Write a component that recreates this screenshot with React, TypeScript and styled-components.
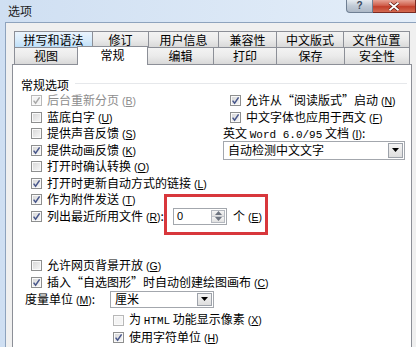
import React from "react";
import styled, { createGlobalStyle } from "styled-components";

const Global = createGlobalStyle`
  html, body { margin: 0; padding: 0; }
  body {
    width: 416px; height: 347px; overflow: hidden;
    font-family: "Noto Sans CJK SC", "Noto Sans", sans-serif;
    font-size: 12px; color: #000;
  }
`;

const Window = styled.div`
  width: 416px; height: 347px; display: flex; flex-direction: column; overflow: hidden;
  background: linear-gradient(to right, #cfdff2, #e4eef9);
`;

const TitleBar = styled.div`
  height: 22px; flex: 0 0 22px; display: flex; align-items: flex-start;
`;

const Title = styled.div`
  padding: 4px 0 0 8px; line-height: 14px; font-size: 12px; color: #1a1a1a;
`;

const Caption = styled.div`
  margin-left: auto; display: flex; align-items: flex-start;
`;

const HelpBtn = styled.div`
  width: 27px; height: 13px; box-sizing: border-box;
  border: 1px solid #6f7f93; border-top: none; border-radius: 0 0 0 4px;
  background: linear-gradient(#e6ebf1, #c0cad6 50%, #aeb9c7);
  display: flex; align-items: center; justify-content: center;
  font-family: "Liberation Sans", sans-serif; font-weight: bold; font-size: 10px; color: #3a4a5e;
  line-height: 12px;
`;

const CloseBtn = styled.div`
  width: 43px; height: 13px; box-sizing: border-box;
  border: 1px solid #7a2a22; border-top: none; border-left: none;
  background: linear-gradient(#e7a395, #d0604d 45%, #c23f2a 55%, #d46a52);
  display: flex; align-items: center; justify-content: center;
`;

const Client = styled.div`
  flex: 1; margin-left: 5px; display: flex; flex-direction: column;
  border-left: 1px solid #8ea3bd; border-top: 1px solid #8ea3bd;
  background: #f0f0f0; padding: 8px 0 0 6px;
`;

const TabStrip = styled.div`
  display: flex; flex-direction: column; padding-left: 2px;
`;

const TabRow = styled.div<{ $h: number }>`
  display: flex; height: ${(p) => p.$h}px; align-items: flex-start;
`;

const Tab = styled.div<{ $w: number; $hot?: boolean; $h: number }>`
  box-sizing: border-box; width: ${(p) => p.$w + 1}px; height: ${(p) => p.$h}px;
  margin-right: -1px;
  border: 1px solid #8c8f97; border-bottom: none;
  background: ${(p) =>
    p.$hot
      ? "linear-gradient(#eaf4fd, #d9ecfb 50%, #bedff8)"
      : "linear-gradient(#f3f3f3, #ebebeb 50%, #d9d9d9)"};
  display: flex; align-items: center; justify-content: center;
  font-size: 12px; line-height: 14px; white-space: nowrap;
`;

const ActiveTab = styled.div<{ $w: number }>`
  position: relative; z-index: 2;
  box-sizing: border-box; width: ${(p) => p.$w + 1}px; height: 19px; margin-top: -1px;
  margin-right: -1px;
  border: 1px solid #8c8f97; border-bottom: none; background: #fff;
  display: flex; align-items: center; justify-content: center; padding-bottom: 2px;
  font-size: 12px; line-height: 14px;
`;

const Panel = styled.div`
  flex: 1; width: 400px; box-sizing: border-box;
  border: 1px solid #8c8f97; border-bottom: none; background: #fff;
  padding: 11px 0 0 8px; display: flex; flex-direction: column;
`;

const HeadingRow = styled.div`
  height: 16.5px; display: flex; align-items: center; gap: 6px; padding-right: 4px;
`;

const Rule = styled.div`
  flex: 1; height: 1px; background: #e6e8eb; margin-top: -1px;
`;

const TopGrid = styled.div`
  display: grid; grid-template-columns: 202px 1fr;
`;

const Col = styled.div<{ $pl: number }>`
  display: flex; flex-direction: column; padding-left: ${(p) => p.$pl}px;
`;

const Row = styled.div<{ $h?: number; $pl?: number; $mt?: number }>`
  height: ${(p) => p.$h ?? 16.5}px; display: flex; align-items: center; gap: 5px;
  white-space: nowrap; line-height: 14px;
  padding-left: ${(p) => p.$pl ?? 0}px;
  margin-top: ${(p) => p.$mt ?? 0}px;
`;

const Text = styled.span<{ $dis?: boolean; $w?: number }>`
  color: ${(p) => (p.$dis ? "#8d8d8d" : "#000")};
  ${(p) => (p.$w ? `flex: 0 0 ${p.$w}px;` : "")}
`;

const Key = styled.span`
  font-family: "Liberation Sans", sans-serif; font-size: 10.5px; margin-left: 3px;
  & u { text-underline-offset: 1px; }
`;

const Latin = styled.span`
  font-family: "Liberation Mono", monospace; font-size: 11px;
`;

const Box = styled.span<{ $dis?: boolean }>`
  flex: 0 0 11px; width: 11px; height: 11px; box-sizing: border-box;
  border: 1px solid ${(p) => (p.$dis ? "#b8b8b8" : "#8e8f8f")};
  background: ${(p) =>
    p.$dis ? "#f4f4f4" : "linear-gradient(135deg, #d5d5d5, #f8f8f8)"};
  box-shadow: inset 0 0 0 1px #fafafa;
  display: flex; align-items: center; justify-content: center;
`;

const Select = styled.div<{ $w: number; $h: number }>`
  width: ${(p) => p.$w}px; height: ${(p) => p.$h}px; box-sizing: border-box;
  border: 1px solid #a3a7ad; background: #fff;
  display: flex; align-items: center; padding: 1px;
`;

const SelectText = styled.span`
  flex: 1; padding-left: 3px; line-height: 14px; white-space: nowrap;
`;

const SelectBtn = styled.span`
  width: 15px; align-self: stretch; box-sizing: border-box;
  border: 1px solid #9da2aa; background: linear-gradient(#f4f4f4, #dedede);
  display: flex; align-items: center; justify-content: center;
`;

const SpinWrap = styled.div`
  position: relative; display: flex; align-items: center; gap: 6px;
  &::before {
    content: ""; position: absolute;
    left: -9px; right: -6px; top: -14px; bottom: -10px;
    border: 3px solid #d8373c; pointer-events: none;
  }
`;

const Spin = styled.div`
  width: 54px; height: 17px; box-sizing: border-box;
  border: 1px solid #a3a7ad; background: #fff; display: flex; padding: 1px;
`;

const SpinValue = styled.span`
  flex: 1; padding-left: 2px; font-family: "Liberation Sans", sans-serif; font-size: 11px;
  line-height: 13px;
`;

const SpinBtns = styled.span`
  width: 14px; display: flex; flex-direction: column;
  border: 1px solid #b5b9c0; box-sizing: border-box;
`;

const SpinHalf = styled.span`
  flex: 1; background: linear-gradient(#f5f5f5, #e1e1e1);
  display: flex; align-items: center; justify-content: center;
  & + & { border-top: 1px solid #c4c7cc; }
`;

const Bottom = styled.div`
  display: flex; flex-direction: column; margin-top: 32px;
`;

const Check = ({ on, dis }: { on?: boolean; dis?: boolean }) => (
  <Box $dis={dis}>
    {on && (
      <svg width="9" height="9" viewBox="0 0 9 9">
        <path
          d="M1.6 4.6 L3.6 7.2 L7.6 1.4"
          fill="none"
          stroke={dis ? "#a8a8a8" : "#47568a"}
          strokeWidth="1.5"
        />
      </svg>
    )}
  </Box>
);

const Arrow = ({ up, color = "#000" }: { up?: boolean; color?: string }) => (
  <svg width="7" height="4" viewBox="0 0 7 4">
    <path d={up ? "M0 4 L3.5 0 L7 4 Z" : "M0 0 L7 0 L3.5 4 Z"} fill={color} />
  </svg>
);

const K = ({ k }: { k: string }) => (
  <Key>
    (<u>{k}</u>)
  </Key>
);

const Option = ({
  on,
  dis,
  label,
  k,
  pl,
  h,
}: {
  on?: boolean;
  dis?: boolean;
  label: React.ReactNode;
  k: string;
  pl?: number;
  h?: number;
}) => (
  <Row $pl={pl} $h={h}>
    <Check on={on} dis={dis} />
    <Text $dis={dis}>
      {label}
      <K k={k} />
    </Text>
  </Row>
);

const row1 = [
  { t: "拼写和语法", w: 78, hot: true },
  { t: "修订", w: 56 },
  { t: "用户信息", w: 70 },
  { t: "兼容性", w: 58 },
  { t: "中文版式", w: 67 },
  { t: "文件位置", w: 66 },
];

const row2 = [
  { t: "视图", w: 63 },
  { t: "常规", w: 70, active: true },
  { t: "编辑", w: 66 },
  { t: "打印", w: 63 },
  { t: "保存", w: 68 },
  { t: "安全性", w: 65 },
];

export default function App() {
  return (
    <>
      <Global />
      <Window>
        <TitleBar>
          <Title>选项</Title>
          <Caption>
            <HelpBtn>?</HelpBtn>
            <CloseBtn>
              <svg width="12" height="9" viewBox="0 0 12 9">
                <path
                  d="M1.5 0.8 L10.5 8.2 M10.5 0.8 L1.5 8.2"
                  stroke="#5a1a12"
                  strokeWidth="3.2"
                />
                <path
                  d="M1.5 0.8 L10.5 8.2 M10.5 0.8 L1.5 8.2"
                  stroke="#fff"
                  strokeWidth="1.8"
                />
              </svg>
            </CloseBtn>
          </Caption>
        </TitleBar>
        <Client>
          <TabStrip>
            <TabRow $h={16}>
              {row1.map((t) => (
                <Tab key={t.t} $w={t.w} $h={16} $hot={t.hot}>
                  {t.t}
                </Tab>
              ))}
            </TabRow>
            <TabRow $h={17}>
              {row2.map((t) =>
                t.active ? (
                  <ActiveTab key={t.t} $w={t.w}>
                    {t.t}
                  </ActiveTab>
                ) : (
                  <Tab key={t.t} $w={t.w} $h={17}>
                    {t.t}
                  </Tab>
                )
              )}
            </TabRow>
          </TabStrip>
          <Panel>
            <HeadingRow>
              <Text>常规选项</Text>
              <Rule />
            </HeadingRow>
            <TopGrid>
              <Col $pl={10}>
                <Option on dis label="后台重新分页" k="B" />
                <Option label="蓝底白字" k="U" />
                <Option label="提供声音反馈" k="S" />
                <Option on label="提供动画反馈" k="K" />
                <Option label="打开时确认转换" k="O" />
                <Option on label="打开时更新自动方式的链接" k="L" />
                <Option on label="作为附件发送" k="T" />
                <Row>
                  <Check on />
                  <Text $w={121}>
                    列出最近所用文件
                    <K k="R" />:
                  </Text>
                  <SpinWrap>
                    <Spin>
                      <SpinValue>0</SpinValue>
                      <SpinBtns>
                        <SpinHalf>
                          <Arrow up color="#6d7480" />
                        </SpinHalf>
                        <SpinHalf>
                          <Arrow color="#6d7480" />
                        </SpinHalf>
                      </SpinBtns>
                    </Spin>
                    <Text>
                      个<K k="E" />
                    </Text>
                  </SpinWrap>
                </Row>
              </Col>
              <Col $pl={0}>
                <Option
                  on
                  pl={7}
                  label={"允许从“阅读版式”启动"}
                  k="N"
                />
                <Option on pl={7} label="中文字体也应用于西文" k="F" />
                <Row>
                  <Text>
                    英文 <Latin>Word 6.0/95</Latin> 文档
                    <K k="I" />:
                  </Text>
                </Row>
                <Row>
                  <Select $w={182} $h={19}>
                    <SelectText>自动检测中文文字</SelectText>
                    <SelectBtn>
                      <Arrow />
                    </SelectBtn>
                  </Select>
                </Row>
              </Col>
            </TopGrid>
            <Bottom>
              <Option pl={10} h={17} label="允许网页背景开放" k="G" />
              <Option
                on
                pl={10}
                h={17}
                label={"插入“自选图形”时自动创建绘图画布"}
                k="C"
              />
              <Row $h={17} $pl={4}>
                <Text $w={80}>
                  度量单位
                  <K k="M" />:
                </Text>
                <Select $w={104} $h={17}>
                  <SelectText>厘米</SelectText>
                  <SelectBtn>
                    <Arrow />
                  </SelectBtn>
                </Select>
              </Row>
              <Row $h={17} $pl={92} $mt={4}>
                <Check dis />
                <Text>
                  为 <Latin>HTML</Latin> 功能显示像素
                  <K k="X" />
                </Text>
              </Row>
              <Option on pl={92} h={17} label="使用字符单位" k="H" />
            </Bottom>
          </Panel>
        </Client>
      </Window>
    </>
  );
}
